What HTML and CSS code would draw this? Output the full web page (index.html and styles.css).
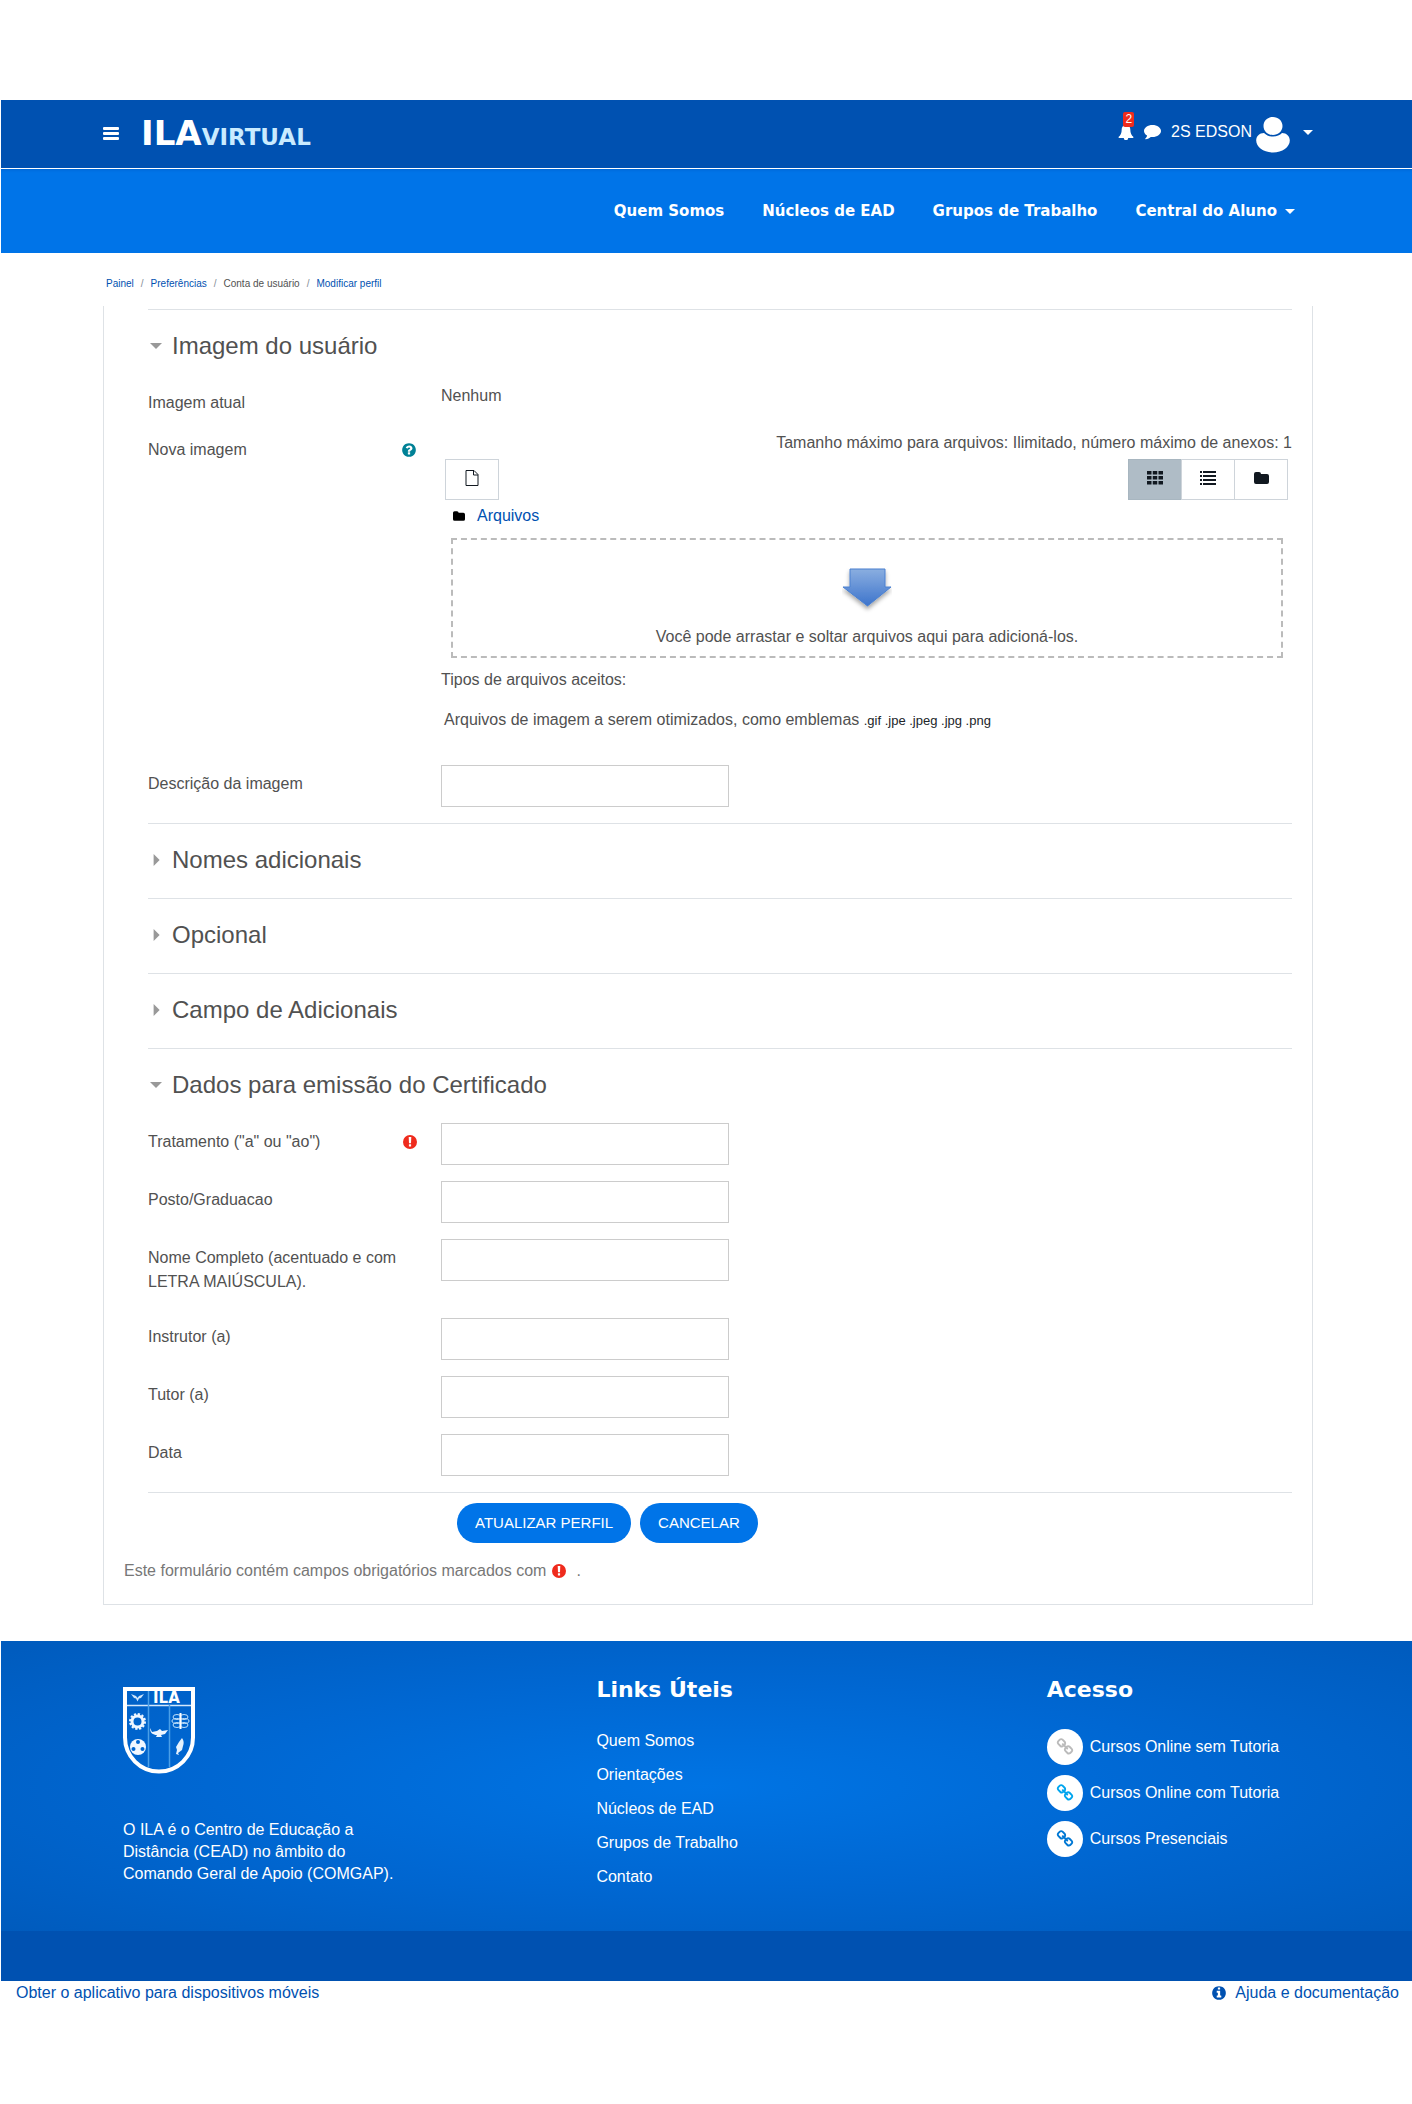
FILE: index.html
```html
<!DOCTYPE html>
<html lang="pt-br">
<head>
<meta charset="utf-8">
<meta name="viewport" content="width=device-width, initial-scale=1">
<title>ILA Virtual - Modificar perfil</title>
<link rel="stylesheet" href="styles.css">
</head>
<body>
<svg class="sprite" aria-hidden="true">
  <symbol id="i-required" viewBox="0 0 14 14"><path fill-rule="evenodd" d="M7 0a7 7 0 1 0 0 14A7 7 0 0 0 7 0zM5.700 2h2.600l-.3 6.200H6zM5.900 9.200h2.200v2.300H5.900z"/></symbol>
  <symbol id="i-folder" viewBox="0 0 15 14"><path d="M0 3a2 2 0 0 1 2-2h3a2 2 0 0 1 2 2h6a2 2 0 0 1 2 2v6a2 2 0 0 1-2 2H2a2 2 0 0 1-2-2z"/></symbol>
  <symbol id="i-link" viewBox="0 0 1792 1792"><path d="M1520 1216q0-40-28-68l-208-208q-28-28-68-28-42 0-72 32 3 3 19 18.500t21.500 21.500 15 19 13 25.500 3.500 27.500q0 40-28 68t-68 28q-15 0-27.500-3.500t-25.500-13-19-15-21.500-21.500-18.500-19q-33 31-33 73 0 40 28 68l206 207q27 27 68 27 40 0 68-26l147-146q28-28 28-67zm-703-705q0-40-28-68l-206-207q-28-28-68-28-39 0-68 27l-147 146q-28 28-28 67 0 40 28 68l208 208q27 27 68 27 42 0 72-31-3-3-19-18.500t-21.500-21.500-15-19-13-25.500-3.500-27.500q0-40 28-68t68-28q15 0 27.500 3.500t25.500 13 19 15 21.500 21.500 18.500 19q33-31 33-73zm895 705q0 120-85 203l-147 146q-83 83-203 83-121 0-204-85l-206-207q-83-83-83-203 0-123 88-209l-88-88q-86 88-208 88-120 0-204-84l-208-208q-84-84-84-204t85-203l147-146q83-83 203-83 121 0 204 85l206 207q83 83 83 203 0 123-88 209l88 88q86-88 208-88 120 0 204 84l208 208q84 84 84 204z"/></symbol>
</svg>

<header class="topbar">
  <button class="icon-button" type="button" aria-label="Menu">
    <svg width="16" height="14" viewBox="0 0 16 14"><path fill="currentColor" d="M1 0h14a1 1 0 0 1 1 1v1a1 1 0 0 1-1 1H1a1 1 0 0 1-1-1V1a1 1 0 0 1 1-1zM1 5h14a1 1 0 0 1 1 1v1a1 1 0 0 1-1 1H1a1 1 0 0 1-1-1V6a1 1 0 0 1 1-1zM1 10h14a1 1 0 0 1 1 1v1a1 1 0 0 1-1 1H1a1 1 0 0 1-1-1v-1a1 1 0 0 1 1-1z"/></svg>
  </button>
  <a class="logo" href="#"><span class="logo-ila">ILA</span><span class="logo-virtual">VIRTUAL</span></a>
  <div class="user-tools">
    <button class="icon-button bell" type="button" aria-label="Notificações">
      <svg width="16" height="16" viewBox="0 0 16 16"><path fill="currentColor" d="M8 0a1 1 0 0 0-1 1.200C4.700 1.700 3.700 3.500 3.700 5.500c0 4-1.200 5.700-3.200 7.500 0 .6.400 1 1 1h4.300a2.200 2.200 0 0 0 4.400 0h4.300c.6 0 1-.4 1-1-2-1.800-3.200-3.500-3.200-7.500 0-2-1-3.800-3.300-4.300A1 1 0 0 0 8 0z"/></svg>
      <span class="badge">2</span>
    </button>
    <button class="icon-button" type="button" aria-label="Mensagens">
      <svg width="17" height="16" viewBox="0 0 17 16"><path fill="currentColor" d="M8.500 1C3.800 1 0 3.700 0 7c0 1.900 1.200 3.500 3.100 4.600-.2 1.500-1 2.400-1.900 3.200-.2.300 0 .6.400.5 2.200-.3 3.900-1.300 5.200-2.400.5.100 1.100.1 1.700.1 4.700 0 8.500-2.700 8.500-6S13.200 1 8.500 1z"/></svg>
    </button>
    <button class="user-menu" type="button">
      <span>2S EDSON</span>
      <svg width="34" height="36" viewBox="0 0 34 36"><path fill="currentColor" d="M17 0c5.200 0 9.500 3.800 9.500 9s-4.300 9-9.500 9-9.500-3.800-9.500-9S11.800 0 17 0zM8 16c2.200 2.200 5 3.500 9 3.500s6.800-1.300 9-3.500c4.600 0 7.800 3.200 7.800 7.500 0 6.500-7.500 12-16.800 12S.2 30 .2 23.500C.2 19.200 3.400 16 8 16z"/></svg>
      <span class="caret"></span>
    </button>
  </div>
</header>

<nav class="mainnav" aria-label="Principal">
  <a href="#">Quem Somos</a>
  <a href="#">Núcleos de EAD</a>
  <a href="#">Grupos de Trabalho</a>
  <a class="dropdown" href="#">Central do Aluno <span class="caret"></span></a>
</nav>

<main class="page">
  <nav aria-label="Trilha">
    <ol class="breadcrumb">
      <li><a href="#">Painel</a></li>
      <li><a href="#">Preferências</a></li>
      <li>Conta de usuário</li>
      <li><a href="#">Modificar perfil</a></li>
    </ol>
  </nav>

  <form class="panel">
    <section class="section">
      <h2><button class="toggle open" type="button" aria-expanded="true">Imagem do usuário</button></h2>
      <div class="row static">
        <span class="label">Imagem atual</span>
        <div class="field">Nenhum</div>
      </div>
      <div class="row">
        <span class="label">Nova imagem
          <button class="icon-button help" type="button" aria-label="Ajuda com Nova imagem">
            <svg width="16" height="16" viewBox="0 0 1792 1792"><path fill="currentColor" d="M1024 1376v-192q0-14-9-23t-23-9h-192q-14 0-23 9t-9 23v192q0 14 9 23t23 9h192q14 0 23-9t9-23zm256-672q0-88-55.500-163t-138.500-116-170-41q-243 0-371 213-15 24 8 42l132 100q7 6 19 6 16 0 25-12 53-68 86-92 34-24 86-24 48 0 85.500 26t37.500 59q0 38-20 61t-68 45q-63 28-115.500 86.500t-52.500 125.500v36q0 14 9 23t23 9h192q14 0 23-9t9-23q0-19 21.500-49.500t54.500-49.500q32-18 49-28.500t46-35 44.500-48 28-60.500 12.500-81zm384 192q0 209-103 385.500t-279.500 279.500-385.500 103-385.500-103-279.500-279.500-103-385.500 103-385.500 279.500-279.500 385.500-103 385.500 103 279.500 279.500 103 385.500z"/></svg>
          </button>
        </span>
        <div class="field">
          <p class="limits">Tamanho máximo para arquivos: Ilimitado, número máximo de anexos: 1</p>
          <div class="toolbar">
            <button class="tool" type="button" aria-label="Adicionar arquivo">
              <svg width="14" height="16" viewBox="0 0 14 16"><path fill="none" stroke="currentColor" d="M1 .5h8l4 4v11H1zM8.500.5V5H13"/></svg>
            </button>
            <div class="views">
              <button class="tool active" type="button" aria-label="Exibir ícones">
                <svg width="16" height="14" viewBox="0 0 16 14"><path fill="currentColor" d="M0 0h4.500v3.500H0zM5.750 0h4.500v3.500h-4.500zM11.500 0H16v3.500h-4.500zM0 5h4.500v3.500H0zM5.750 5h4.500v3.500h-4.500zM11.500 5H16v3.500h-4.500zM0 10h4.500v3.500H0zM5.750 10h4.500v3.500h-4.500zM11.500 10H16v3.500h-4.500z"/></svg>
              </button>
              <button class="tool" type="button" aria-label="Exibir lista">
                <svg width="16" height="14" viewBox="0 0 16 14"><path fill="currentColor" d="M0 0h2v2H0zM3 0h13v2H3zM0 4h2v2H0zM3 4h13v2H3zM0 8h2v2H0zM3 8h13v2H3zM0 12h2v2H0zM3 12h13v2H3z"/></svg>
              </button>
              <button class="tool" type="button" aria-label="Exibir árvore">
                <svg width="15" height="14"><use href="#i-folder"/></svg>
              </button>
            </div>
          </div>
          <div class="path"><svg width="12" height="12"><use href="#i-folder"/></svg><a href="#">Arquivos</a></div>
          <div class="dropzone">
            <svg width="50" height="48" viewBox="0 0 50 48">
              <defs>
                <linearGradient id="arrow" x1="0" y1="0" x2="0" y2="1"><stop offset="0" stop-color="#8aaee0"/><stop offset="1" stop-color="#3d74cc"/></linearGradient>
                <filter id="shade" x="-20%" y="-20%" width="140%" height="150%"><feDropShadow dx="0" dy="3" stdDeviation="2" flood-color="#000" flood-opacity=".35"/></filter>
              </defs>
              <path d="M8 1h35v18h6L25.500 38 1 19h7z" fill="url(#arrow)" stroke="#4a80d0" filter="url(#shade)"/>
            </svg>
            <p>Você pode arrastar e soltar arquivos aqui para adicioná-los.</p>
          </div>
          <p class="types">Tipos de arquivos aceitos:</p>
          <p class="types-list">Arquivos de imagem a serem otimizados, como emblemas <small>.gif .jpe .jpeg .jpg .png</small></p>
        </div>
      </div>
      <div class="row">
        <label class="label" for="imagealt">Descrição da imagem</label>
        <div class="field"><input id="imagealt" type="text"></div>
      </div>
    </section>

    <section class="section"><h2><button class="toggle" type="button" aria-expanded="false">Nomes adicionais</button></h2></section>
    <section class="section"><h2><button class="toggle" type="button" aria-expanded="false">Opcional</button></h2></section>
    <section class="section"><h2><button class="toggle" type="button" aria-expanded="false">Campo de Adicionais</button></h2></section>

    <section class="section">
      <h2><button class="toggle open" type="button" aria-expanded="true">Dados para emissão do Certificado</button></h2>
      <div class="row">
        <label class="label" for="tratamento">Tratamento ("a" ou "ao")
          <svg class="required" width="14" height="14" role="img" aria-label="Necessário"><use href="#i-required"/></svg>
        </label>
        <div class="field"><input id="tratamento" type="text" required></div>
      </div>
      <div class="row">
        <label class="label" for="posto">Posto/Graduacao</label>
        <div class="field"><input id="posto" type="text"></div>
      </div>
      <div class="row">
        <label class="label" for="nome">Nome Completo (acentuado e com LETRA MAIÚSCULA).</label>
        <div class="field"><input id="nome" type="text"></div>
      </div>
      <div class="row">
        <label class="label" for="instrutor">Instrutor (a)</label>
        <div class="field"><input id="instrutor" type="text"></div>
      </div>
      <div class="row">
        <label class="label" for="tutor">Tutor (a)</label>
        <div class="field"><input id="tutor" type="text"></div>
      </div>
      <div class="row">
        <label class="label" for="data">Data</label>
        <div class="field"><input id="data" type="text"></div>
      </div>
    </section>

    <div class="actions">
      <button class="btn" type="submit">ATUALIZAR PERFIL</button>
      <button class="btn" type="button">CANCELAR</button>
    </div>
    <p class="note">Este formulário contém campos obrigatórios marcados com <svg class="required" width="14" height="14" role="img" aria-label="Necessário"><use href="#i-required"/></svg> <span>.</span></p>
  </form>
</main>

<footer>
  <div class="footer-main">
    <div>
      <svg class="crest" width="72" height="88" viewBox="0 0 72 88" role="img" aria-label="Brasão ILA">
        <path d="M2 2h68v48.500a34 34 0 0 1-68 0z" fill="none" stroke="#fff" stroke-width="4"/>
        <path d="M4 18.500h64" stroke="#d4e8fb" stroke-width="1.500"/>
        <path d="M25.500 4v76M46.500 18v62" stroke="#4a9fe8" stroke-width="1.500"/>
        <path d="M8 7l5 2 1.500 2L16 9l5-2-3 4-2 .5-1.500 3-1.500-3-2-.5z" fill="#cfe4fa"/>
        <text x="30" y="16" class="crest-text">ILA</text>
        <circle cx="14.500" cy="34.500" r="5.500" fill="none" stroke="#eef6ff" stroke-width="3"/>
        <circle cx="14.500" cy="34.500" r="7.500" fill="none" stroke="#eef6ff" stroke-width="2" stroke-dasharray="2.300 1.630"/>
        <circle cx="15" cy="60" r="8" fill="#f2f8ff"/>
        <g fill="#0066d0"><circle cx="15" cy="55" r="2"/><circle cx="10.500" cy="62" r="2"/><circle cx="19.500" cy="62" r="2"/></g>
        <path d="M27 41l2 4 5-1 3-2 2 2 6-1-3 4-4 1 1 2h-6l1-2c-4 0-7-2-7-7z" fill="#eef6ff"/>
        <g fill="none" stroke="#bfe0fb"><ellipse cx="54" cy="30" rx="4" ry="2.500"/><ellipse cx="61" cy="30" rx="4" ry="2.500"/><ellipse cx="53.500" cy="34" rx="4.500" ry="2.500"/><ellipse cx="61.500" cy="34" rx="4.500" ry="2.500"/><ellipse cx="54" cy="38" rx="4" ry="2.500"/><ellipse cx="61" cy="38" rx="4" ry="2.500"/></g>
        <path d="M57.500 26v16" stroke="#fff" stroke-width="2"/>
        <path d="M59 51c2 3 2 5 1 8l-1 4-4 3 1 2-3-1 1-4-1-3 3-5z" fill="#e4f1fd"/>
      </svg>
      <p class="about">O ILA é o Centro de Educação a Distância (CEAD) no âmbito do Comando Geral de Apoio (COMGAP).</p>
    </div>
    <div>
      <h3>Links Úteis</h3>
      <ul class="links">
        <li><a href="#">Quem Somos</a></li>
        <li><a href="#">Orientações</a></li>
        <li><a href="#">Núcleos de EAD</a></li>
        <li><a href="#">Grupos de Trabalho</a></li>
        <li><a href="#">Contato</a></li>
      </ul>
    </div>
    <div>
      <h3>Acesso</h3>
      <ul class="access">
        <li><a href="#"><span class="disc gray"><svg width="18" height="18"><use href="#i-link"/></svg></span>Cursos Online sem Tutoria</a></li>
        <li><a href="#"><span class="disc cyan"><svg width="18" height="18"><use href="#i-link"/></svg></span>Cursos Online com Tutoria</a></li>
        <li><a href="#"><span class="disc blue"><svg width="18" height="18"><use href="#i-link"/></svg></span>Cursos Presenciais</a></li>
      </ul>
    </div>
  </div>
  <div class="footer-strip"></div>
  <div class="footer-links">
    <a href="#">Obter o aplicativo para dispositivos móveis</a>
    <a class="docs" href="#"><svg width="16" height="16" viewBox="0 0 1792 1792"><path fill="currentColor" d="M1152 1376v-160q0-14-9-23t-23-9h-96v-512q0-14-9-23t-23-9h-320q-14 0-23 9t-9 23v160q0 14 9 23t23 9h96v320h-96q-14 0-23 9t-9 23v160q0 14 9 23t23 9h448q14 0 23-9t9-23zm-128-896v-160q0-14-9-23t-23-9h-192q-14 0-23 9t-9 23v160q0 14 9 23t23 9h192q14 0 23-9t9-23zm640 416q0 209-103 385.500t-279.500 279.500-385.500 103-385.500-103-279.500-279.500-103-385.500 103-385.500 279.500-279.500 385.500-103 385.500 103 279.500 279.500 103 385.500z"/></svg>Ajuda e documentação</a>
  </div>
</footer>
</body>
</html>
```
FILE: styles.css
```css
* { box-sizing: border-box; }

body {
  margin: 0;
  padding: 100px 0 100px 1px;
  background: #fff;
  color: #515151;
  font: 16px/24px "Liberation Sans", Arial, sans-serif;
}

a { color: #0051b1; text-decoration: none; }
h2, h3, p, ul, ol { margin: 0; padding: 0; font-weight: 400; }
ul, ol { list-style: none; }
button, input { font: inherit; color: inherit; }
svg { display: block; flex: none; fill: currentColor; }
.sprite { display: none; }

.icon-button {
  display: flex;
  padding: 0;
  border: 0;
  background: none;
}

.caret {
  width: 0;
  border: 5px solid transparent;
  border-top-color: currentColor;
  border-bottom: 0;
}

/* Header */
.topbar {
  display: flex;
  align-items: center;
  height: 68px;
  padding: 0 99px 0 102px;
  background: #0051b1;
  color: #fff;
}

.logo {
  display: flex;
  align-items: baseline;
  margin-left: 22px;
  padding-top: 2px;
  color: #fff;
  font-family: "DejaVu Sans", sans-serif;
  font-weight: 700;
}
.logo-ila { font-size: 34px; }
.logo-virtual { font-size: 23px; color: #c9ebff; }

.user-tools {
  display: flex;
  align-items: center;
  gap: 10px;
  margin-left: auto;
  padding-bottom: 4px;
}

.bell { position: relative; }
.badge {
  position: absolute;
  top: -12px;
  right: 0;
  padding: 0 2px;
  border-radius: 2px;
  background: #ef2b1d;
  color: #fff;
  font-size: 12px;
  line-height: 15px;
}

.user-menu {
  display: flex;
  align-items: center;
  gap: 4px;
  padding: 0;
  border: 0;
  background: none;
}
.user-menu svg { margin-top: 6px; }
.user-menu .caret { margin-left: 9px; }

.mainnav {
  display: flex;
  align-items: center;
  justify-content: flex-end;
  gap: 38px;
  height: 84px;
  margin-top: 1px;
  padding-right: 117px;
  background: #0074e8;
  box-shadow: inset 0 3px 3px -2px #0051b166;
}
.mainnav a {
  color: #fff;
  font: 700 15px/24px "DejaVu Sans", sans-serif;
}
.mainnav .dropdown { display: flex; align-items: center; gap: 8px; }

/* Page */
.page { padding: 0 99px 36px 102px; }

.breadcrumb {
  display: flex;
  padding: 21px 3px 12px;
  font-size: 10px;
  line-height: 20px;
}
.breadcrumb li + li::before {
  content: "/";
  padding: 0 7px;
  color: #868e96;
}

.panel {
  padding: 3px 20px 20px 44px;
  border: 1px solid #dee2e6;
  border-top: 0;
}

.section { border-top: 1px solid #dee2e6; }

.toggle {
  display: flex;
  align-items: center;
  gap: 10px;
  height: 74px;
  padding: 0 0 2px 2px;
  border: 0;
  background: none;
  font-size: 24px;
}
.toggle::before {
  content: "";
  width: 12px;
  height: 12px;
  background: #999;
  clip-path: polygon(30% 0, 80% 50%, 30% 100%);
}
.toggle.open::before { clip-path: polygon(0 25%, 100% 25%, 50% 75%); }

.row {
  display: grid;
  grid-template-columns: 263px minmax(0, 1fr);
  column-gap: 30px;
  padding-bottom: 16px;
}
.row.static { padding-bottom: 8px; }

.label {
  display: flex;
  align-items: center;
  align-self: start;
  justify-content: space-between;
  padding: 7px 0 8px;
}
.label .help { margin-right: -6px; color: #008196; }
.label .required { margin-right: -6px; }
.required { color: #ef2b1d; }

input {
  display: block;
  width: 288px;
  max-width: 100%;
  height: 42px;
  padding: 0 12px;
  border: 1px solid #ccc;
  background: #fff;
}

/* File manager */
.limits { text-align: right; }
.toolbar {
  display: flex;
  justify-content: space-between;
  padding: 4px;
}
.views { display: flex; }
.tool {
  display: flex;
  align-items: center;
  justify-content: center;
  width: 54px;
  height: 41px;
  padding: 0 0 4px;
  border: 1px solid #ced4da;
  background: #fff;
  color: #111820;
}
.views .tool + .tool { margin-left: -1px; }
.tool.active { background: #afbcc6; border-color: #a8b6c0; }

.path {
  display: flex;
  align-items: center;
  gap: 12px;
  padding-left: 12px;
  color: #000;
}

.dropzone {
  display: flex;
  flex-direction: column;
  align-items: center;
  height: 120px;
  margin: 10px 9px 10px 10px;
  padding-top: 28px;
  border: 2px dashed #bbb;
}
.dropzone p { padding-top: 9px; }

.types-list { padding: 16px 0 16px 3px; }
small { color: #212529; font-size: 13px; }

/* Form actions */
.actions {
  display: flex;
  gap: 9px;
  padding: 10px 0 0 309px;
  border-top: 1px solid #dee2e6;
}
.btn {
  height: 40px;
  padding: 0 18px;
  border: 0;
  border-radius: 20px;
  background: #0074e8;
  color: #fff;
  font-size: 15px;
}
.note {
  display: flex;
  align-items: center;
  gap: 6px;
  margin: 16px 0 0 -24px;
  padding-bottom: 1px;
  color: #777;
}
.note span { padding-left: 4px; }

/* Footer */
.footer-main {
  display: grid;
  grid-template-columns: 473fr 450fr 246fr;
  height: 290px;
  padding: 35px 119px 0 122px;
  background: radial-gradient(ellipse at center, #0074e4 0%, #0067d2 50%, #005bbd 100%);
  color: #fff;
}
.footer-main a { color: #fff; }
.footer-main h3 {
  font: 700 22px/28px "DejaVu Sans", sans-serif;
}
.crest { margin-top: 11px; }
.crest-text { fill: #fff; font: 700 15px "DejaVu Sans", sans-serif; }
.about {
  max-width: 280px;
  padding-top: 44px;
  line-height: 22px;
}
.links { padding-top: 20px; line-height: 34px; }
.access {
  display: grid;
  gap: 10px;
  padding-top: 25px;
}
.access a { display: flex; align-items: center; gap: 7px; white-space: nowrap; }
.disc {
  display: grid;
  place-items: center;
  width: 36px;
  height: 36px;
  border-radius: 50%;
  background: #fff;
}
.gray { color: #bbb; }
.cyan { color: #00a5ee; }
.blue { color: #0078d4; }

.footer-strip { height: 50px; background: #0051b1; }
.footer-links {
  display: flex;
  justify-content: space-between;
  padding: 0 13px 0 15px;
}
.docs { display: flex; align-items: center; gap: 8px; }
```
